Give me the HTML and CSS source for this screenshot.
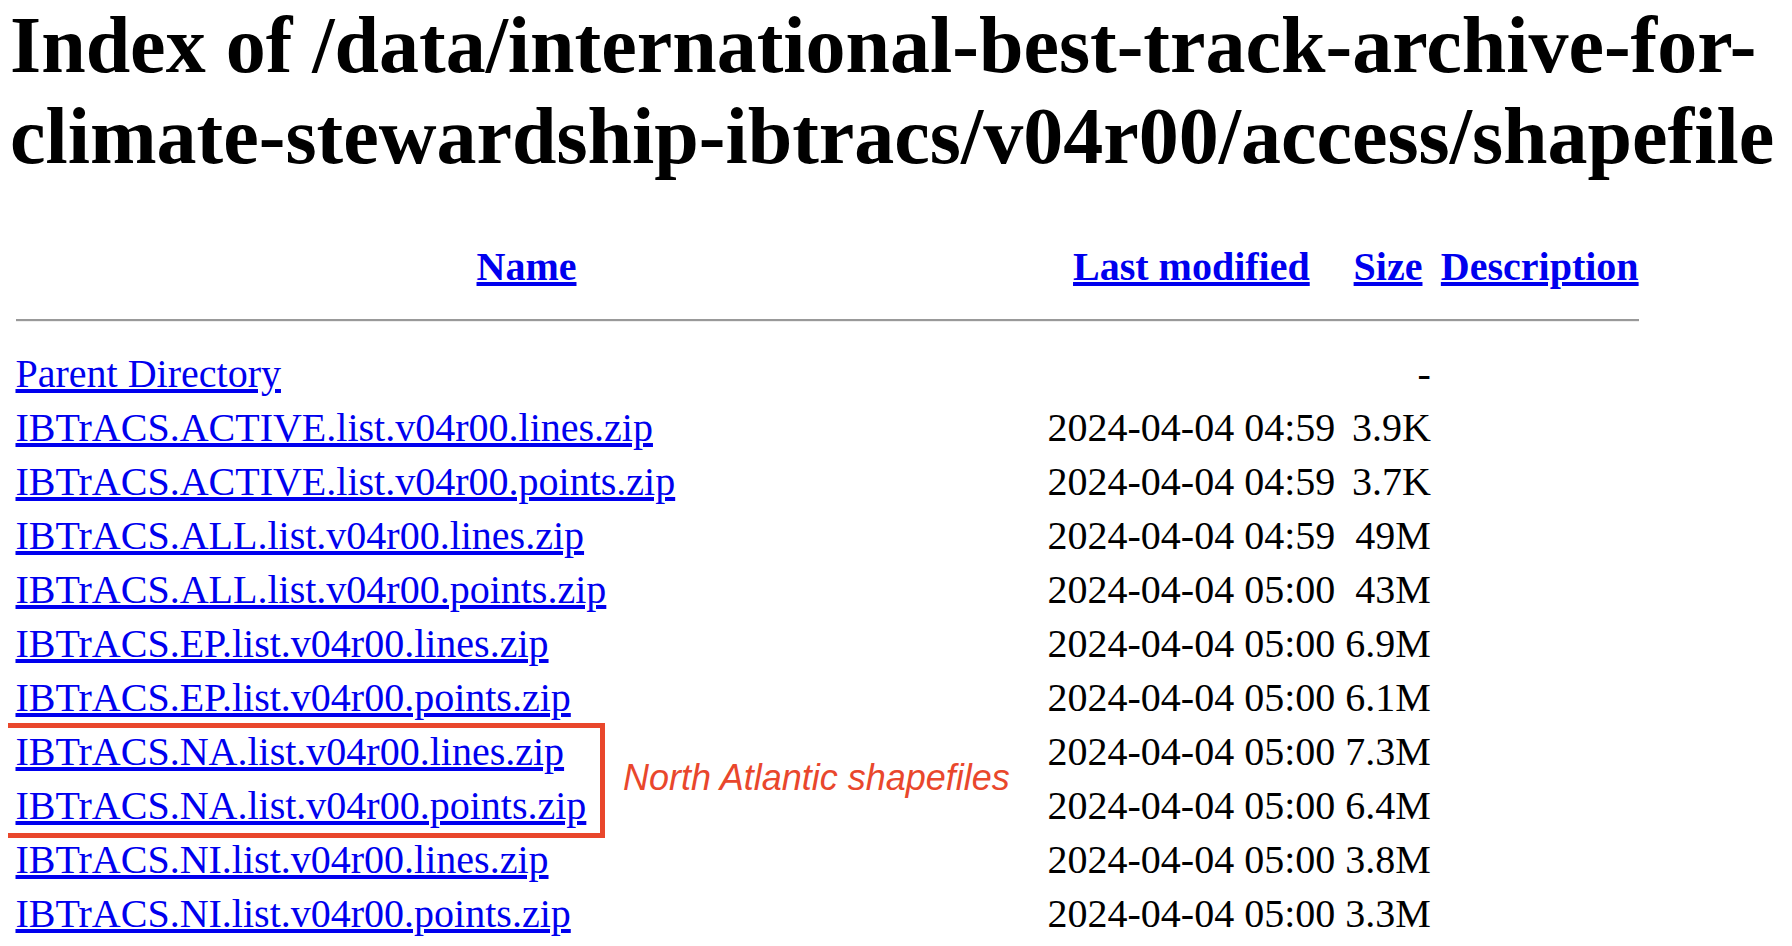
FILE: index.html
```html
<!DOCTYPE html>
<html lang="en">
<head>
<meta charset="utf-8">
<title>Index of /data/international-best-track-archive-for-climate-stewardship-ibtracs/v04r00/access/shapefile</title>
<link rel="stylesheet" href="styles.css">
</head>
<body class="page">
<h1 class="title">Index of /data/international-best-track-archive-for-climate-stewardship-ibtracs/v04r00/access/shapefile</h1>
<table class="listing">
  <tr>
    <th class="col-name"><a href="?C=N;O=D">Name</a></th>
    <th class="col-date"><a href="?C=M;O=A">Last modified</a></th>
    <th class="col-size"><a href="?C=S;O=A">Size</a></th>
    <th class="col-desc"><a href="?C=D;O=A">Description</a></th>
  </tr>
  <tr><th colspan="4" class="rule-cell"><hr class="rule"></th></tr>
  <tr>
    <td><a href="/data/international-best-track-archive-for-climate-stewardship-ibtracs/v04r00/access/">Parent Directory</a></td>
    <td>&nbsp;</td>
    <td class="num">-</td>
    <td>&nbsp;</td>
  </tr>
  <tr>
    <td><a href="IBTrACS.ACTIVE.list.v04r00.lines.zip">IBTrACS.ACTIVE.list.v04r00.lines.zip</a></td>
    <td class="num">2024-04-04 04:59</td>
    <td class="num">3.9K</td>
    <td>&nbsp;</td>
  </tr>
  <tr>
    <td><a href="IBTrACS.ACTIVE.list.v04r00.points.zip">IBTrACS.ACTIVE.list.v04r00.points.zip</a></td>
    <td class="num">2024-04-04 04:59</td>
    <td class="num">3.7K</td>
    <td>&nbsp;</td>
  </tr>
  <tr>
    <td><a href="IBTrACS.ALL.list.v04r00.lines.zip">IBTrACS.ALL.list.v04r00.lines.zip</a></td>
    <td class="num">2024-04-04 04:59</td>
    <td class="num">49M</td>
    <td>&nbsp;</td>
  </tr>
  <tr>
    <td><a href="IBTrACS.ALL.list.v04r00.points.zip">IBTrACS.ALL.list.v04r00.points.zip</a></td>
    <td class="num">2024-04-04 05:00</td>
    <td class="num">43M</td>
    <td>&nbsp;</td>
  </tr>
  <tr>
    <td><a href="IBTrACS.EP.list.v04r00.lines.zip">IBTrACS.EP.list.v04r00.lines.zip</a></td>
    <td class="num">2024-04-04 05:00</td>
    <td class="num">6.9M</td>
    <td>&nbsp;</td>
  </tr>
  <tr>
    <td><a href="IBTrACS.EP.list.v04r00.points.zip">IBTrACS.EP.list.v04r00.points.zip</a></td>
    <td class="num">2024-04-04 05:00</td>
    <td class="num">6.1M</td>
    <td>&nbsp;</td>
  </tr>
  <tr>
    <td class="note-anchor"><a href="IBTrACS.NA.list.v04r00.lines.zip">IBTrACS.NA.list.v04r00.lines.zip</a><span class="highlight-box"></span><span class="note">North Atlantic shapefiles</span></td>
    <td class="num">2024-04-04 05:00</td>
    <td class="num">7.3M</td>
    <td>&nbsp;</td>
  </tr>
  <tr>
    <td><a href="IBTrACS.NA.list.v04r00.points.zip">IBTrACS.NA.list.v04r00.points.zip</a></td>
    <td class="num">2024-04-04 05:00</td>
    <td class="num">6.4M</td>
    <td>&nbsp;</td>
  </tr>
  <tr>
    <td><a href="IBTrACS.NI.list.v04r00.lines.zip">IBTrACS.NI.list.v04r00.lines.zip</a></td>
    <td class="num">2024-04-04 05:00</td>
    <td class="num">3.8M</td>
    <td>&nbsp;</td>
  </tr>
  <tr>
    <td><a href="IBTrACS.NI.list.v04r00.points.zip">IBTrACS.NI.list.v04r00.points.zip</a></td>
    <td class="num">2024-04-04 05:00</td>
    <td class="num">3.3M</td>
    <td>&nbsp;</td>
  </tr>
</table>
</body>
</html>
```

FILE: styles.css
```css
html {
  background: #ffffff;
}

.page {
  margin: 0 8px;
  font-family: "Liberation Serif", "Times New Roman", Times, serif;
  color: #000000;
}

.title {
  margin: 0 0 55px 2px;
  font-size: 80px;
  line-height: 91px;
  font-weight: bold;
}

.listing {
  border-spacing: 5px;
  font-size: 40px;
  line-height: 44px;
}

.listing th,
.listing td {
  padding: 2.5px;
  white-space: nowrap;
}

.listing th {
  font-weight: bold;
  text-align: center;
}

.listing td {
  text-align: left;
}

.listing a {
  color: #0000ee;
  text-decoration: underline;
}

.col-name {
  width: 1022px;
}

.listing td.num {
  text-align: right;
}

.rule-cell {
  line-height: normal;
}

.rule {
  margin: 20px 0;
  height: 0;
  border: 0;
  border-top: 2px solid #999999;
  border-bottom: 1px solid #eeeeee;
}

.note-anchor {
  position: relative;
}

.highlight-box {
  position: absolute;
  left: -10px;
  top: -4px;
  width: 592px;
  height: 105px;
  border: 5px solid #e9472c;
  pointer-events: none;
}

.note {
  position: absolute;
  left: 610px;
  top: 33px;
  font-family: "Liberation Sans", Arial, Helvetica, sans-serif;
  font-style: italic;
  font-size: 36px;
  line-height: 36px;
  color: #e9472c;
  white-space: nowrap;
}
```
